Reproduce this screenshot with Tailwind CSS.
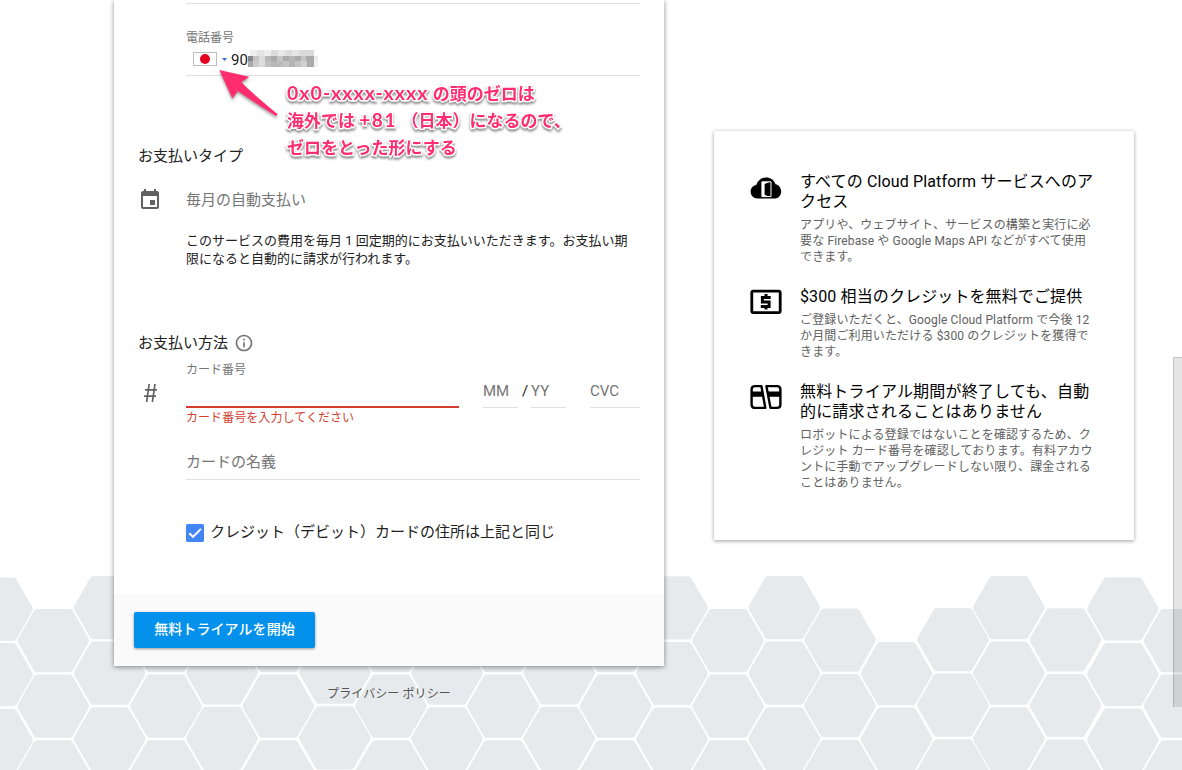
<!DOCTYPE html>
<html lang="ja">
<head>
<meta charset="utf-8">
<title>無料トライアル</title>
<script src="https://cdn.jsdelivr.net/npm/@tailwindcss/browser@4"></script>
</head>
<body class="relative h-[770px] w-[1182px] overflow-hidden bg-white font-[Roboto,'Noto_Sans_CJK_JP',sans-serif] text-[#212121] whitespace-nowrap">

<!-- honeycomb background -->
<svg class="absolute inset-0 -z-10" width="1182" height="770" viewBox="0 0 1182 770" fill="#e6eaed">
  <defs>
    <path id="h" d="M-16.500-31.600H16.500Q18.600-31.600 19.700-29.100L35.200-2.200Q36.300 0 35.200 2.200L19.700 29.100Q18.600 31.600 16.500 31.600H-16.500Q-18.600 31.600-19.700 29.100L-35.200 2.200Q-36.300 0-35.200-2.200L-19.700-29.100Q-18.600-31.600-16.500-31.600Z"/>
    <g id="c"><use href="#h" y="31.600"/><use href="#h" y="97.200"/><use href="#h" y="162.800"/><use href="#h" y="228.400"/></g>
  </defs>
  <use href="#c" x="-3" y="577.500"/><use href="#c" x="53.300" y="609"/><use href="#c" x="109.600" y="576"/>
  <use href="#c" x="166" y="609"/><use href="#c" x="222" y="575.600"/><use href="#c" x="278.400" y="609"/>
  <use href="#c" x="334.900" y="575"/><use href="#c" x="391" y="609"/><use href="#c" x="447" y="576"/>
  <use href="#c" x="503" y="609"/><use href="#c" x="559.300" y="575.600"/><use href="#c" x="615.600" y="609"/>
  <use href="#c" x="672" y="576.300"/><use href="#c" x="728" y="609"/><use href="#c" x="784.300" y="576"/>
  <use href="#c" x="840" y="608.500"/><use href="#c" x="896.500" y="642"/><use href="#c" x="953" y="608"/>
  <use href="#c" x="1008.800" y="576"/><use href="#c" x="1065.500" y="608.300"/><use href="#c" x="1122.800" y="577.300"/>
  <use href="#c" x="1179.500" y="609"/>
</svg>

<main class="flex items-start gap-[50px] pl-[114px]">
  <div class="w-[550px]">
    <section class="flex h-[666px] flex-col bg-white shadow-[0_1px_5px_rgba(0,0,0,.45)]">
      <div class="flex h-[594px] flex-col pr-6 pl-6">
        <div class="mt-[3px] ml-12 h-px bg-[#e0e0e0]"></div>
        <div class="mt-[26px] ml-12 text-xs leading-4 text-[#757575]">電話番号</div>
        <div class="mt-[5px] ml-12 flex h-[25px] items-start border-b border-[#e0e0e0] pl-[7px]">
          <div class="mt-px flex h-[14px] w-6 items-center justify-center border border-[#bdbdbd] bg-white"><div class="size-[10px] rounded-full bg-[#e60020]"></div></div>
          <svg class="mt-[7px] ml-[5px]" width="5" height="3" viewBox="0 0 5 3"><path d="M0 0H5L2.500 3Z" fill="#3367d6"/></svg>
          <div class="ml-1 text-[15px] leading-[18px]">90</div>
          <div class="-mt-px flex flex-col blur-[.5px]">
            <div class="flex h-[6px]"><i class="ml-[2px] w-[7px] bg-[#eee]"></i><i class="w-[7px] bg-[#e4e4e4]"></i><i class="w-[7px] bg-[#eee]"></i><i class="w-[7px] bg-[#dcdcdc]"></i><i class="w-[7px] bg-[#e8e8e8]"></i><i class="w-[7px] bg-[#ddd]"></i><i class="w-[7px] bg-[#e6e6e6]"></i><i class="w-[15px] bg-[#dadada]"></i></div>
            <div class="flex h-[5px]"><i class="w-[5px] bg-[#888]"></i><i class="w-[6px] bg-[#c4c4c4]"></i><i class="w-[6px] bg-[#ddd]"></i><i class="w-[6px] bg-[#b8b8b8]"></i><i class="w-[6px] bg-[#aaa]"></i><i class="w-[6px] bg-[#c4c4c4]"></i><i class="w-[6px] bg-[#aaa]"></i><i class="w-[6px] bg-[#b6b6b6]"></i><i class="w-[6px] bg-[#aaa]"></i><i class="w-[5px] bg-[#c4c4c4]"></i><i class="w-[8px] bg-[#aaa]"></i><i class="w-[4px] bg-[#eee]"></i></div>
            <div class="flex h-[6px]"><i class="w-[5px] bg-[#aaa]"></i><i class="w-[6px] bg-[#ccc]"></i><i class="w-[6px] bg-[#ddd]"></i><i class="w-[6px] bg-[#c0c0c0]"></i><i class="w-[6px] bg-[#b8b8b8]"></i><i class="w-[6px] bg-[#bbb]"></i><i class="w-[6px] bg-[#c4c4c4]"></i><i class="w-[6px] bg-[#b4b4b4]"></i><i class="w-[6px] bg-[#c4c4c4]"></i><i class="w-[6px] bg-[#d0d0d0]"></i><i class="w-[7px] bg-[#aaa]"></i><i class="w-[4px] bg-[#f2f2f2]"></i></div>
          </div>
        </div>

        <h2 class="mt-[70px] text-[15px] leading-5">お支払いタイプ</h2>
        <div class="mt-[24px] flex h-5 items-center text-[15px] leading-5 text-[#757575]">
          <svg class="mr-6" width="24" height="24" viewBox="0 0 24 24" fill="#616161"><path d="M17 12h-5v5h5v-5zM16 1v2H8V1H6v2H5c-1.110 0-1.990.9-1.990 2L3 19c0 1.100.89 2 2 2h14c1.100 0 2-.9 2-2V5c0-1.100-.9-2-2-2h-1V1h-2zm3 18H5V8h14v11z"/></svg>
          毎月の自動支払い
        </div>
        <p class="mt-[22px] ml-12 text-[13px] leading-[18px]">このサービスの費用を毎月 1 回定期的にお支払いいただきます。お支払い期<br>限になると自動的に請求が行われます。</p>

        <h2 class="mt-[65px] flex h-5 items-center text-[15px] leading-5">お支払い方法
          <svg class="ml-[6px]" width="20" height="20" viewBox="0 0 24 24" fill="#757575"><path d="M11 17h2v-6h-2v6zm1-15C6.480 2 2 6.480 2 12s4.480 10 10 10 10-4.480 10-10S17.520 2 12 2zm0 18c-4.410 0-8-3.590-8-8s3.590-8 8-8 8 3.590 8 8-3.590 8-8 8zM11 9h2V7h-2v2z"/></svg>
        </h2>
        <div class="mt-[9px] ml-12 text-xs leading-4 text-[#757575]">カード番号</div>
        <div class="flex h-[30px] items-stretch text-[15px] leading-[26px] text-[#757575]">
          <div class="flex w-12 items-center pl-[6px]"><svg width="13" height="18" viewBox="0 0 13 18" fill="none" stroke="#616161" stroke-width="1.700"><path d="M5.200 0L2.600 18M11 0L8.400 18M1 5.900H13M0 12.200H12"/></svg></div>
          <div class="w-[273px] border-b-2 border-[#d23f31]"></div>
          <div class="ml-6 w-[35px] border-b border-[#e0e0e0]">MM</div>
          <div class="w-[13px] pl-1 text-[#212121]">/</div>
          <div class="w-[35px] border-b border-[#e0e0e0]">YY</div>
          <div class="ml-6 w-[50px] border-b border-[#e0e0e0]">CVC</div>
        </div>
        <div class="mt-[2px] ml-12 text-xs leading-4 tracking-[.06px] text-[#d23f31]">カード番号を入力してください</div>
        <div class="mt-[26px] ml-12 h-[28px] border-b border-[#e0e0e0] text-[15px] leading-5 text-[#757575]">カードの名義</div>
        <label class="mt-[44px] ml-12 flex h-[18px] items-start text-[15px] leading-[17px]">
          <svg class="mr-[6px]" width="18" height="18" viewBox="0 0 18 18"><rect width="18" height="18" rx="1.500" fill="#4285f4"/><path d="M3.300 9.200L7 12.900L15 4.900" fill="none" stroke="#fff" stroke-width="2"/></svg>
          クレジット（デビット）カードの住所は上記と同じ
        </label>
      </div>
      <div class="h-[72px] bg-[#fafafa] pt-[18px] pl-5">
        <button class="block h-9 w-[181px] rounded-[2px] bg-[#0391eb] pb-[2px] text-sm leading-[34px] font-medium tracking-[.08px] text-white shadow-[0_1px_3px_rgba(0,0,0,.4)]">無料トライアルを開始</button>
      </div>
    </section>
    <a class="mt-[20px] block text-center text-xs leading-4 tracking-[.1px] text-[#555]">プライバシー ポリシー</a>
  </div>

  <aside class="mt-[131px] flex h-[409px] w-[420px] flex-col gap-[22px] bg-white pt-[41px] pl-9 shadow-[0_1px_4px_rgba(0,0,0,.4)]">
    <div class="flex">
      <svg class="mt-[5px]" width="32" height="22" viewBox="0 0 32 22"><path d="M7.500 21.500C3.500 21.500.6 18.500.6 14.800c0-3.400 2.200-6 5.700-6.700C7.700 3.200 11.400.5 16 .5c4.500 0 8.200 2.700 9.500 6.700 3.300.6 5.700 3.600 5.700 7.200 0 4.100-2.900 7.100-6.900 7.100Z"/><path d="M11.900 4.800H21V19.600H11.900Z" fill="none" stroke="#fff" stroke-width="1"/><path d="M12 5H19.500L14.600 7V17.800L18.500 19.500H12Z" fill="#fff"/></svg>
      <div class="ml-[18px]">
        <h3 class="text-[16px] leading-5 tracking-[.14px] text-black">すべての Cloud Platform サービスへのア<br>クセス</h3>
        <p class="mt-[5px] text-xs leading-4 tracking-[.14px] text-[#616161]">アプリや、ウェブサイト、サービスの構築と実行に必<br>要な Firebase や Google Maps API などがすべて使用<br>できます。</p>
      </div>
    </div>
    <div class="flex">
      <svg class="mt-px" width="32" height="27" viewBox="0 0 32 27" fill="none" stroke="#000"><rect x="1.800" y="3.100" width="28.400" height="21.500" rx="1.500" stroke-width="2.800"/><path d="M20.700 9.600H12.400V14H19.100V18.400H10.800M16 6V9.600M16 18.400V21.500" stroke-width="3"/></svg>
      <div class="ml-[18px]">
        <h3 class="text-[16px] leading-5 tracking-[.12px] text-black">$300 相当のクレジットを無料でご提供</h3>
        <p class="mt-[5px] text-xs leading-4 tracking-[.14px] text-[#616161]">ご登録いただくと、Google Cloud Platform で今後 12<br>か月間ご利用いただける $300 のクレジットを獲得で<br>きます。</p>
      </div>
    </div>
    <div class="flex">
      <svg class="mt-px" width="32" height="27" viewBox="0 0 32 27" fill="none" stroke="#000" stroke-width="2.400" stroke-linejoin="round"><path d="M5 3.100H11.400L15.300 24.900H5Q1.600 24.900 1.600 21.500V6.500Q1.600 3.100 5 3.100Z"/><path d="M16.400 3.100H27Q30.400 3.100 30.400 6.500V21.500Q30.400 24.900 27 24.900H20.500Z"/><path d="M1.600 9H12.700L13.500 13.200H1.600ZM17.500 9H30.400V13.200H18.400Z" fill="#000" stroke-width="1"/></svg>
      <div class="ml-[18px]">
        <h3 class="text-[16px] leading-5 tracking-[.18px] text-black">無料トライアル期間が終了しても、自動<br>的に請求されることはありません</h3>
        <p class="mt-[5px] text-xs leading-4 tracking-[.14px] text-[#616161]">ロボットによる登録ではないことを確認するため、ク<br>レジット カード番号を確認しております。有料アカウ<br>ントに手動でアップグレードしない限り、課金される<br>ことはありません。</p>
      </div>
    </div>
  </aside>
</main>

<!-- annotation -->
<svg class="absolute top-[60px] left-[210px] drop-shadow-[0_2px_1.500px_rgba(0,0,0,.4)]" width="80" height="66" viewBox="210 60 80 66"><path d="M219.300 70L249.300 76.700L241.500 82Q246 88 277.700 114.300L276 116Q252 101 237.800 91L232.300 98.500Z" fill="#ff2d6f"/></svg>
<div class="absolute top-[80px] left-[287px] font-[Lato,'Noto_Sans_CJK_JP',sans-serif] text-[17px] leading-[27px] font-bold text-[#ff2d6f] [-webkit-text-stroke:3px_white] [paint-order:stroke_fill] drop-shadow-[0_2px_1px_rgba(0,0,0,.45)]">
  <div class="h-[27px]"><span class="text-[19.5px] leading-none tracking-[1.05px]">0x0-xxxx-xxxx</span> の頭のゼロは</div>
  <div class="h-[27px]">海外では <span class="text-[19px] leading-none tracking-[1.700px]">+81</span> （日本）になるので、</div>
  <div class="h-[27px]">ゼロをとった形にする</div>
</div>

<!-- scrollbar thumb -->
<div class="absolute top-[357px] right-0 h-[350px] w-[9px] border-t border-l border-black/15 bg-black/10"></div>
</body>
</html>
